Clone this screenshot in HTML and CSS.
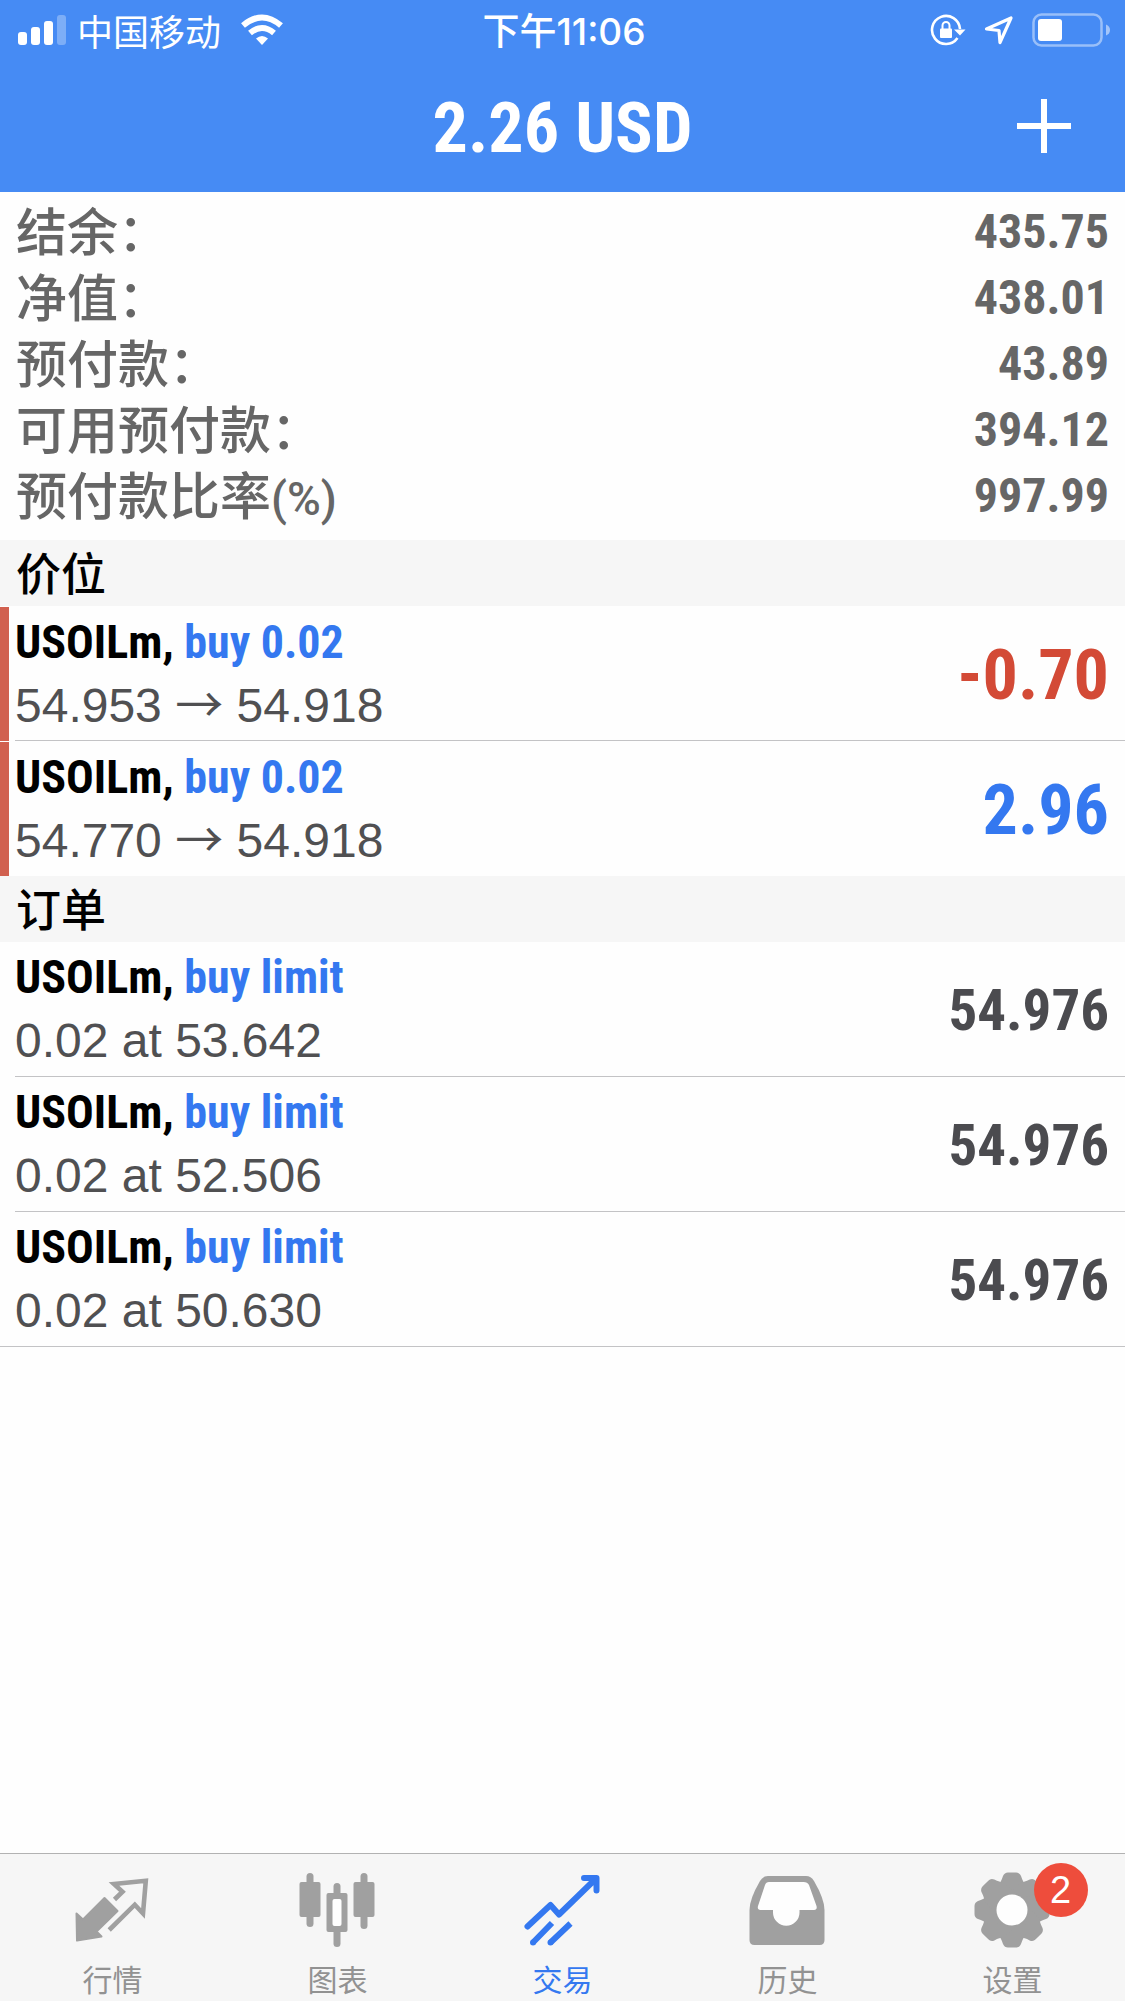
FILE: index.html
```html
<!DOCTYPE html>
<html lang="zh-CN">
<head>
<meta charset="utf-8">
<meta name="viewport" content="width=device-width, initial-scale=1">
<title>交易</title>
<link rel="stylesheet" href="styles.css">
</head>
<body>
<header class="top">
  <div class="status">
    <div class="status-left">
      <svg class="signal" width="48" height="32" viewBox="0 0 48 32" fill="#fff" aria-hidden="true">
        <rect x="0" y="18" width="9" height="13" rx="3"/>
        <rect x="13" y="13" width="9" height="18" rx="3"/>
        <rect x="26" y="7" width="9" height="24" rx="3"/>
        <rect x="39" y="1" width="9" height="30" rx="3" opacity=".3"/>
      </svg>
      <span class="carrier">中国移动</span>
      <svg class="wifi" width="42" height="32" viewBox="0 0 42 32" aria-hidden="true">
        <g fill="none" stroke="#fff" stroke-width="6">
          <path d="M2 11.500Q21 -4.500 40 11.500"/>
          <path d="M9 19Q21 9 33 19"/>
        </g>
        <path d="M15 24.500Q21 19.500 27 24.500L21 31z" fill="#fff"/>
      </svg>
    </div>
    <time class="clock">下午11:06</time>
    <div class="status-right">
      <svg class="lock" width="36" height="32" viewBox="0 0 36 32" aria-hidden="true">
        <path d="M30 15A14 14 0 1 0 27.500 24" fill="none" stroke="#fff" stroke-width="2.600"/>
        <path d="M24 15.500H35.500L30 21.500z" fill="#fff"/>
        <rect x="10" y="14.500" width="12" height="9.500" rx="1" fill="#fff"/>
        <path d="M12.500 15V11.500a3.500 3.500 0 0 1 7 0V15" fill="none" stroke="#fff" stroke-width="2"/>
      </svg>
      <svg class="location" width="30" height="32" viewBox="0 0 30 32" aria-hidden="true">
        <path d="M2.500 15L27 4L16 28.500L15 16.500z" fill="none" stroke="#fff" stroke-width="3.200" stroke-linejoin="round"/>
      </svg>
      <svg class="battery" width="78" height="36" viewBox="0 0 78 36" aria-hidden="true">
        <rect x="1.500" y="2.500" width="68" height="31" rx="8" fill="none" stroke="#fff" stroke-width="2.500" opacity=".45"/>
        <rect x="6" y="7" width="24" height="22" rx="3" fill="#fff"/>
        <path d="M74 12.500Q78 14 78 18T74 23.500z" fill="#fff" opacity=".5"/>
      </svg>
    </div>
  </div>
  <div class="titlebar">
    <h1 class="title">2.26 USD</h1>
    <button class="add" type="button" aria-label="新订单">
      <svg width="54" height="54" viewBox="0 0 54 54" aria-hidden="true"><path d="M27 0V54M0 27H54" stroke="#fff" stroke-width="6"/></svg>
    </button>
  </div>
</header>

<main class="content">
  <dl class="summary">
    <div class="summary-row"><dt>结余：</dt><dd>435.75</dd></div>
    <div class="summary-row"><dt>净值：</dt><dd>438.01</dd></div>
    <div class="summary-row"><dt>预付款：</dt><dd>43.89</dd></div>
    <div class="summary-row"><dt>可用预付款：</dt><dd>394.12</dd></div>
    <div class="summary-row"><dt>预付款比率<span class="unit">(%)</span></dt><dd>997.99</dd></div>
  </dl>

  <h2 class="section">价位</h2>
  <ul class="list positions">
    <li class="item">
      <div class="item-body">
        <div class="item-text">
          <p class="symbol">USOILm, <span class="side">buy 0.02</span></p>
          <p class="detail">54.953 <span class="arrow">→</span> 54.918</p>
        </div>
        <span class="profit loss">-0.70</span>
      </div>
    </li>
    <li class="item">
      <div class="item-body">
        <div class="item-text">
          <p class="symbol">USOILm, <span class="side">buy 0.02</span></p>
          <p class="detail">54.770 <span class="arrow">→</span> 54.918</p>
        </div>
        <span class="profit gain">2.96</span>
      </div>
    </li>
  </ul>

  <h2 class="section">订单</h2>
  <ul class="list orders">
    <li class="item">
      <div class="item-body">
        <div class="item-text">
          <p class="symbol">USOILm, <span class="side">buy limit</span></p>
          <p class="detail">0.02 at 53.642</p>
        </div>
        <span class="price">54.976</span>
      </div>
    </li>
    <li class="item">
      <div class="item-body">
        <div class="item-text">
          <p class="symbol">USOILm, <span class="side">buy limit</span></p>
          <p class="detail">0.02 at 52.506</p>
        </div>
        <span class="price">54.976</span>
      </div>
    </li>
    <li class="item">
      <div class="item-body">
        <div class="item-text">
          <p class="symbol">USOILm, <span class="side">buy limit</span></p>
          <p class="detail">0.02 at 50.630</p>
        </div>
        <span class="price">54.976</span>
      </div>
    </li>
  </ul>
</main>

<nav class="tabs">
  <a class="tab" href="#quotes">
    <span class="tab-icon">
      <svg width="80" height="80" viewBox="0 0 80 80" aria-hidden="true">
        <path d="M3.500 43.500L10 49.500L31.500 28L44.500 41L23.500 61.500L28.500 66.500L4 70.500z" fill="currentColor" stroke="currentColor" stroke-width="2" stroke-linejoin="round"/>
        <path d="M41.500 29.500L49.500 21.700L41 14L72.800 10.700L70 43.500L61.800 34.700L36.200 60" fill="none" stroke="currentColor" stroke-width="4.600"/>
      </svg>
    </span>
    <span class="tab-label">行情</span>
  </a>
  <a class="tab" href="#charts">
    <span class="tab-icon">
      <svg width="80" height="80" viewBox="0 0 80 80" fill="currentColor" aria-hidden="true">
        <rect x="1.500" y="12" width="21" height="35" rx="2"/>
        <rect x="8.500" y="3" width="7" height="54" rx="3.500"/>
        <rect x="35.500" y="13" width="7" height="64" rx="3.500"/>
        <rect x="28.500" y="23" width="21" height="39" rx="2"/>
        <rect x="34.500" y="29" width="9" height="27" rx="2" fill="#fefefe"/>
        <rect x="55.500" y="12" width="21" height="35" rx="2"/>
        <rect x="62.500" y="3" width="7" height="56" rx="3.500"/>
      </svg>
    </span>
    <span class="tab-label">图表</span>
  </a>
  <a class="tab active" href="#trade" aria-current="page">
    <span class="tab-icon">
      <svg width="80" height="80" viewBox="0 0 80 80" fill="none" stroke="currentColor" stroke-width="6" aria-hidden="true">
        <path d="M4.500 56.500L27.500 35L36 44.500L73 8.500M61 8H73.500V20.500" stroke-linecap="round" stroke-linejoin="round"/>
        <path d="M10 72.500L29 53M27.500 72.500L47.500 53.500"/>
        <g fill="currentColor" stroke="none"><circle cx="10" cy="72.500" r="3"/><circle cx="27.500" cy="72.500" r="3"/></g>
      </svg>
    </span>
    <span class="tab-label">交易</span>
  </a>
  <a class="tab" href="#history">
    <span class="tab-icon">
      <svg width="80" height="80" viewBox="0 0 80 80" aria-hidden="true">
        <path d="M20 6H58Q63 6 66 11Q76.500 29 76.500 40V70Q76.500 75 71.500 75H6.500Q1.500 75 1.500 70V40Q1.500 29 12 11Q15 6 20 6z" fill="currentColor"/>
        <path d="M21 12H55.500Q59.500 12 61 15L68.500 36Q69.500 40 66 40H51.500V42.500A13.200 13.200 0 0 1 25 42.500V40H12.500Q9 40 10 36L17 15Q18 12 21 12z" fill="#fefefe"/>
      </svg>
    </span>
    <span class="tab-label">历史</span>
  </a>
  <a class="tab" href="#settings">
    <span class="tab-icon">
      <svg width="80" height="80" viewBox="0 0 80 80" aria-hidden="true">
        <defs><path id="tooth" d="M-15 0L-13 -26Q-11 -28 -9 -34Q-7.500 -37.500 -4 -37.500H4Q7.500 -37.500 9 -34Q11 -28 13 -26L15 0z"/></defs>
        <g transform="translate(39 40)" fill="currentColor">
          <circle r="28"/>
          <use href="#tooth"/>
          <use href="#tooth" transform="rotate(45)"/>
          <use href="#tooth" transform="rotate(90)"/>
          <use href="#tooth" transform="rotate(135)"/>
          <use href="#tooth" transform="rotate(180)"/>
          <use href="#tooth" transform="rotate(225)"/>
          <use href="#tooth" transform="rotate(270)"/>
          <use href="#tooth" transform="rotate(315)"/>
          <circle r="15.500" fill="#fefefe"/>
        </g>
      </svg>
      <span class="badge">2</span>
    </span>
    <span class="tab-label">设置</span>
  </a>
</nav>
</body>
</html>
```
FILE: styles.css
```css
:root {
  --cjk: "Noto Sans CJK SC", sans-serif;
  --narrow: "Roboto Condensed", "Liberation Sans", "Noto Sans CJK SC", sans-serif;
  --sans: "Liberation Sans", "Noto Sans CJK SC", sans-serif;
  --blue: #3478f0;
  --line: #c3c3c5;
}

* {
  box-sizing: border-box;
}

body {
  margin: 0;
  min-height: 100vh;
  display: flex;
  flex-direction: column;
  background: #fefefe;
  font-family: var(--sans);
}

h1, h2, p, ul, dl, dd {
  margin: 0;
  padding: 0;
}

svg {
  display: block;
}

/* Header */
.top {
  background: #468bf4;
  color: #fff;
}

.status {
  display: grid;
  grid-template-columns: 1fr auto 1fr;
  align-items: center;
  height: 60px;
  padding: 0 15px 0 18px;
}

.status-left,
.status-right {
  display: flex;
  align-items: center;
}

.status-right {
  justify-content: flex-end;
  gap: 18px;
}

.carrier {
  margin: 0 20px 0 11px;
  font: 36px/60px var(--cjk);
}

.clock {
  padding-top: 3px;
  font: 500 37px/57px Inter, var(--cjk);
}

.titlebar {
  display: grid;
  grid-template-columns: 1fr auto 1fr;
  align-items: center;
  height: 132px;
  padding: 0 54px;
}

.title {
  grid-column: 2;
  padding-top: 3px;
  font: bold 70px/84px var(--narrow);
}

.add {
  justify-self: end;
  padding: 0;
  border: 0;
  background: none;
}

/* Account summary */
.summary {
  padding: 7px 16px 11px;
  color: #666;
}

.summary-row {
  display: flex;
  align-items: flex-start;
  justify-content: space-between;
}

.summary dt {
  font: 500 51px/60px var(--cjk);
}

.unit {
  font: 500 46px/1 Roboto, sans-serif;
}

.summary dd {
  font: bold 48px/66px var(--narrow);
}

/* Lists */
.section {
  padding: 0 16px 2px;
  background: #f6f6f6;
  color: #000;
  font: 500 45px/64px var(--cjk);
}

.list {
  list-style: none;
}

.item {
  padding-left: 15px;
}

.item-body {
  display: flex;
  align-items: center;
  justify-content: space-between;
  height: 135px;
  padding-right: 16px;
  border-bottom: 1px solid var(--line);
}

.positions .item {
  margin-top: 1px;
  padding-left: 6px;
  border-left: 9px solid #d1604f;
}

.positions .item-body {
  height: 134px;
}

.positions .item:last-child .item-body {
  border-bottom-color: transparent;
}

.orders .item:last-child {
  padding-left: 0;
}

.orders .item:last-child .item-body {
  padding-left: 15px;
}

.symbol {
  color: #000;
  font: bold 46px/63px var(--narrow);
}

.side {
  color: var(--blue);
}

.detail {
  color: #505052;
  font: 48px/63px var(--sans);
}

.arrow {
  font-family: var(--cjk);
  line-height: 1;
}

.profit,
.price {
  padding-top: 3px;
}

.profit {
  font: bold 70px/84px var(--narrow);
}

.loss {
  color: #d34a36;
}

.gain {
  color: var(--blue);
}

.price {
  color: #4b4b4f;
  font: bold 57px/84px var(--narrow);
}

/* Tab bar */
.tabs {
  display: grid;
  grid-template-columns: repeat(5, 1fr);
  margin-top: auto;
  padding: 16px 0 3px;
  border-top: 1px solid #b2b2b2;
  background: #f6f6f6;
}

.tab {
  display: flex;
  flex-direction: column;
  align-items: center;
  gap: 8px;
  color: #a0a0a0;
  text-decoration: none;
}

.tab.active {
  color: var(--blue);
}

.tab-icon {
  position: relative;
}

.tab-label {
  color: #929292;
  font: 30px/40px var(--cjk);
}

.active .tab-label {
  color: inherit;
}

.badge {
  position: absolute;
  top: -7px;
  left: 61px;
  width: 54px;
  height: 54px;
  border-radius: 50%;
  background: #ee4d3c;
  color: #fff;
  font: 38px/54px var(--sans);
  text-align: center;
}
```
